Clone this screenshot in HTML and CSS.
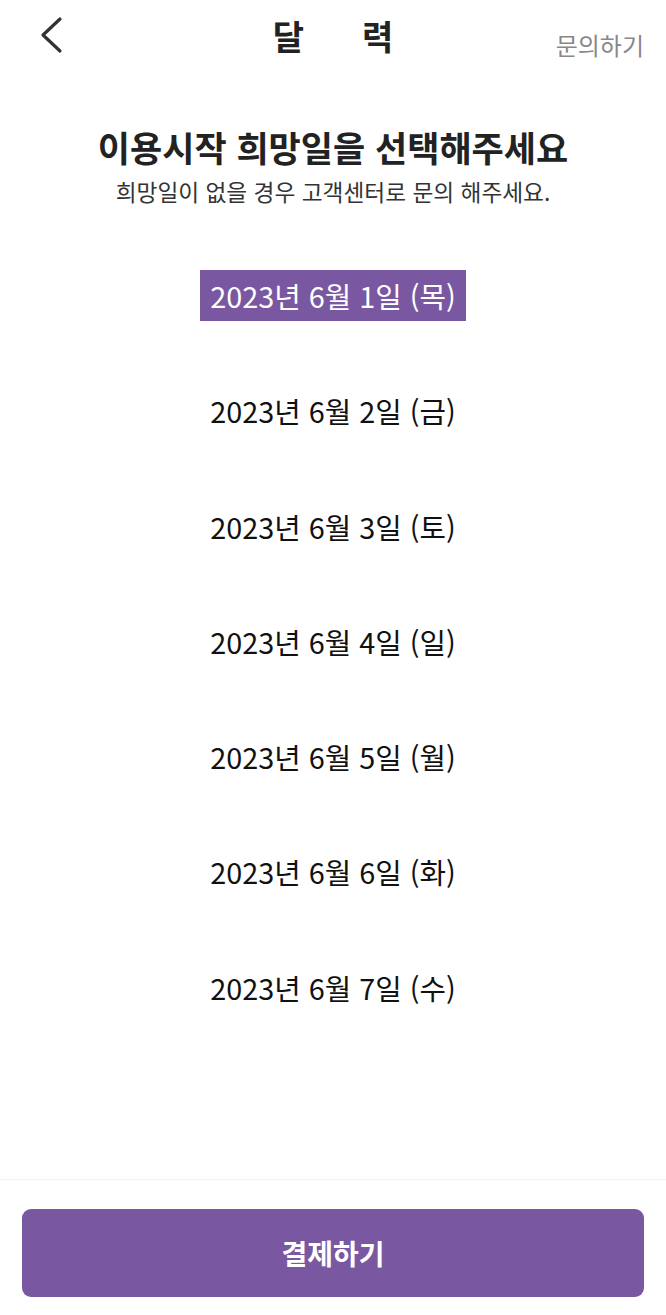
FILE: index.html
```html
<!DOCTYPE html>
<html lang="ko">
<head>
<meta charset="utf-8">
<link rel="stylesheet" href="styles.css">
</head>
<body>
<div class="page">
  <header class="topbar">
    <button class="back" aria-label="뒤로">
      <svg width="26" height="40" viewBox="0 0 26 40"><polyline points="21,4 4,20 21,36" fill="none" stroke="#333" stroke-width="3.2" stroke-linecap="round" stroke-linejoin="round"/></svg>
    </button>
    <h1 class="title"><span>달</span><span>력</span></h1>
    <a class="inquiry">문의하기</a>
  </header>
  <main class="content">
    <h2 class="heading">이용시작 희망일을 선택해주세요</h2>
    <p class="sub">희망일이 없을 경우 고객센터로 문의 해주세요.</p>
    <ul class="dates">
      <li class="date selected">2023년 6월 1일 (목)</li>
      <li class="date">2023년 6월 2일 (금)</li>
      <li class="date">2023년 6월 3일 (토)</li>
      <li class="date">2023년 6월 4일 (일)</li>
      <li class="date">2023년 6월 5일 (월)</li>
      <li class="date">2023년 6월 6일 (화)</li>
      <li class="date">2023년 6월 7일 (수)</li>
    </ul>
  </main>
  <footer class="footer">
    <button class="pay">결제하기</button>
  </footer>
</div>
</body>
</html>
```
FILE: styles.css
```css
* { box-sizing: border-box; }
html, body { margin: 0; padding: 0; background: #fff; }
body { font-family: "Noto Sans CJK KR", "Noto Sans", sans-serif; color: #222; }
.page { height: 1315px; display: flex; flex-direction: column; }
.topbar {
  height: 75px;
  display: grid;
  grid-template-columns: 1fr auto 1fr;
  align-items: center;
  padding: 0 22px;
}
.back { background: none; border: 0; padding: 0; justify-self: start; display: flex; margin: -6px 0 0 17px; }
.title {
  margin: -4px 0 0;
  font-size: 34px;
  font-weight: 700;
  color: #222;
  display: flex;
  gap: 58px;
  line-height: 1;
}
.inquiry { justify-self: end; font-size: 24px; color: #888; margin-top: 14px; }
.content { display: flex; flex-direction: column; align-items: center; }
.heading { margin: 50px 0 0; font-size: 35px; font-weight: 700; line-height: 44px; color: #222; }
.sub { margin: 8px 0 0; font-size: 22.7px; line-height: 30px; color: #333; }
.dates {
  list-style: none;
  margin: 63px 0 0;
  padding: 0;
  display: flex;
  flex-direction: column;
  align-items: center;
  gap: 64.3px;
}
.date {
  height: 51px;
  line-height: 51px;
  padding: 0 10px;
  font-size: 28.8px;
  color: #111;
}
.date.selected { background: #7a58a1; color: #fff; }
.footer {
  margin-top: auto;
  border-top: 1px solid #f0f0f0;
  padding: 29px 22px 18px;
}
.pay {
  width: 100%;
  height: 88px;
  border: 0;
  border-radius: 9px;
  background: #7a58a1;
  color: #fff;
  font-family: inherit;
  font-size: 28px;
  font-weight: 700;
}
```
